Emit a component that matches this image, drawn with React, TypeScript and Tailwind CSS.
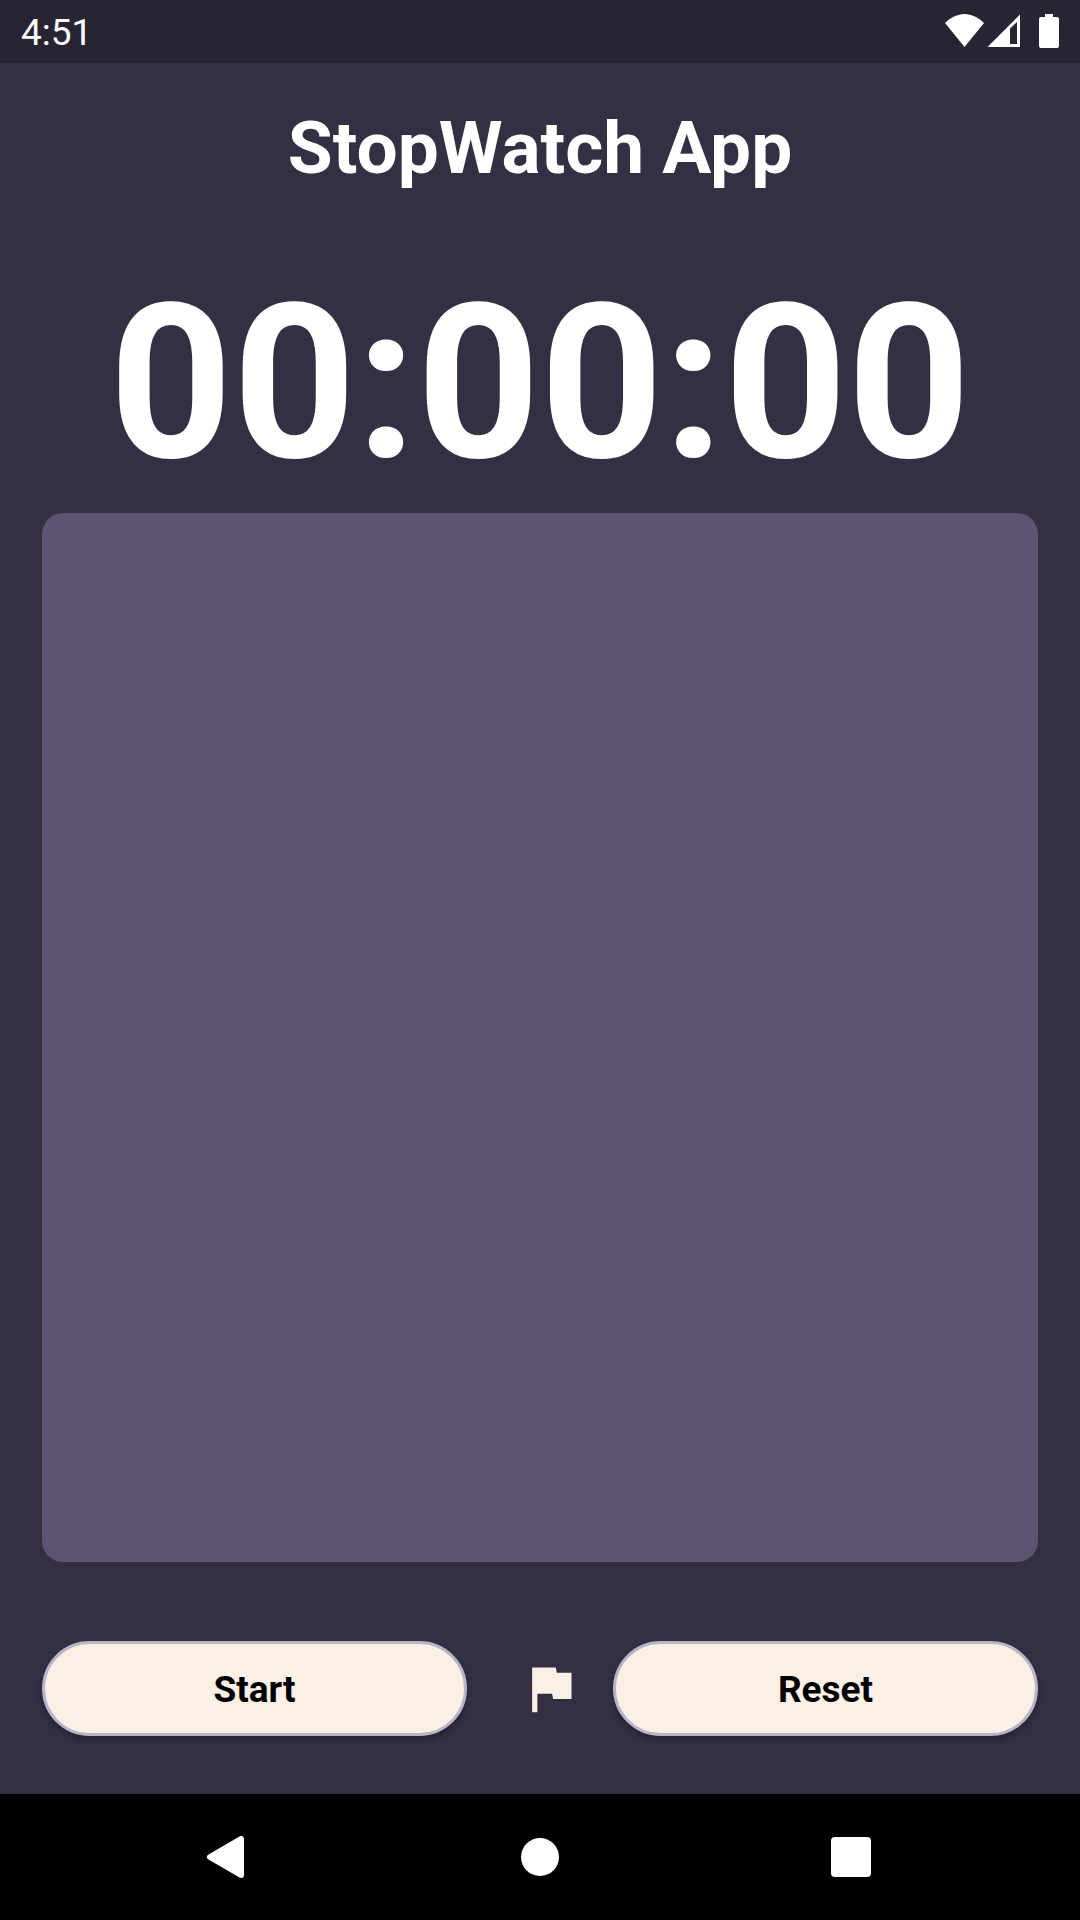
import type { ReactNode } from "react";

function PillButton({ children }: { children: ReactNode }) {
  return (
    <button className="h-[95px] flex-1 rounded-full border-[3px] border-[#b9b4c7] bg-[#faf0e6] pt-0.5 text-[37px] font-bold text-black shadow-[0_4px_6px_rgba(0,0,0,0.3)]">
      {children}
    </button>
  );
}

function StatusBar() {
  return (
    <header className="flex h-[63px] items-start justify-between bg-[#282433] pl-[21px] pr-[21px]">
      <span className="mt-[11px] text-[37px] leading-[44px]">4:51</span>
      <div className="mt-3.5 flex items-start">
        <svg width="40" height="34" viewBox="0 0 40 34" fill="#fff" role="img" aria-label="Wi-Fi">
          <path d="M19.500 33 0 9C5.500 3.500 12.500 0 19.500 0S33.500 3.500 39 9Z" />
        </svg>
        <svg className="ml-0.5" width="34" height="34" viewBox="0 0 34 34" fill="#fff" role="img" aria-label="Mobile signal">
          <path fillRule="evenodd" d="M.5 33 33 .5V33ZM23 14.500V30H30V8Z" />
        </svg>
        <svg className="ml-[18px]" width="20" height="34" viewBox="0 0 20 34" fill="#fff" role="img" aria-label="Battery">
          <path d="M6 0H14V3H18Q20 3 20 5V32Q20 34 18 34H2Q0 34 0 32V5Q0 3 2 3H6Z" />
        </svg>
      </div>
    </header>
  );
}

function NavigationBar() {
  return (
    <nav className="grid h-[126px] grid-cols-3 bg-black px-[74px]">
      <button aria-label="Back" className="flex items-center justify-center">
        <svg width="48" height="48" viewBox="0 0 48 48" fill="#fff" stroke="#fff" strokeWidth="6" strokeLinejoin="round">
          <path d="M5 24 36 6V42Z" />
        </svg>
      </button>
      <button aria-label="Home" className="flex items-center justify-center">
        <span className="size-[38px] rounded-full bg-white" />
      </button>
      <button aria-label="Recent apps" className="flex items-center justify-center">
        <span className="size-10 rounded bg-white" />
      </button>
    </nav>
  );
}

export default function App() {
  return (
    <div className="flex min-h-screen flex-col bg-[#352f44] font-['Roboto',sans-serif] text-white">
      <StatusBar />
      <main className="flex flex-1 flex-col px-[42px]">
        <h1 className="mt-[42px] text-center text-[73px] font-bold leading-[86px]">StopWatch App</h1>
        <p className="mt-[64px] text-center text-[215px] font-bold leading-[258px]">00:00:00</p>
        <section aria-label="Laps" className="flex-1 rounded-[21px] bg-[#5c5470]" />
        <div className="mb-[58px] mt-[79px] flex items-center">
          <PillButton>Start</PillButton>
          <button aria-label="Lap" className="ml-[52px] mr-[31px] size-[63px] shrink-0">
            <svg width="63" height="63" viewBox="0 0 24 24" fill="#faf0e6">
              <path d="M14.400 6 14 4H5v17h2v-7h5.600l.4 2h7V6z" />
            </svg>
          </button>
          <PillButton>Reset</PillButton>
        </div>
      </main>
      <NavigationBar />
    </div>
  );
}
